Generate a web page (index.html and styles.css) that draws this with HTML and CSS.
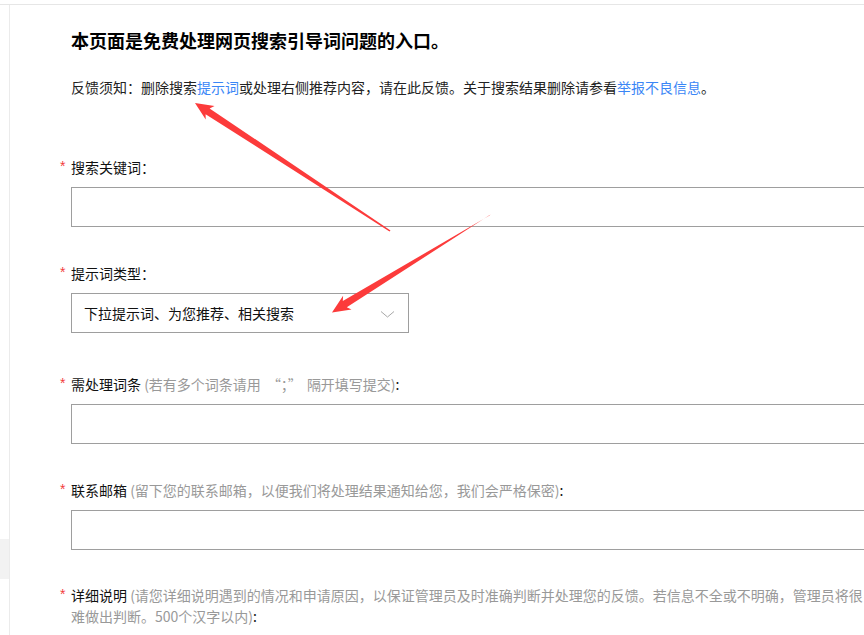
FILE: index.html
```
<!DOCTYPE html>
<html lang="zh-CN">
<head>
<meta charset="utf-8">
<title>提示词反馈</title>
<link rel="stylesheet" href="styles.css">
</head>
<body>
<div class="page">
  <aside class="side"><div class="side-block"></div></aside>
  <main class="main">
    <h1 class="title">本页面是免费处理网页搜索引导词问题的入口。</h1>
    <p class="notice">反馈须知：删除搜索<a class="link" href="#">提示词</a>或处理右侧推荐内容，请在此反馈。关于搜索结果删除请参看<a class="link" href="#">举报不良信息</a>。</p>

    <div class="field">
      <div class="label"><span class="req">*</span>搜索关键词：</div>
      <input class="box" type="text">
    </div>

    <div class="field field-select">
      <div class="label"><span class="req">*</span>提示词类型：</div>
      <div class="select">
        <span class="select-text">下拉提示词、为您推荐、相关搜索</span>
        <svg class="chev" width="15" height="8" viewBox="0 0 15 8"><path d="M1 1.5 L7.5 7 L14 1.5" fill="none" stroke="#a8a8a8" stroke-width="1"/></svg>
      </div>
    </div>

    <div class="field">
      <div class="label"><span class="req">*</span>需处理词条 <span class="hint">(若有多个词条请用<span class="quote">“；”</span>隔开填写提交)</span>:</div>
      <input class="box" type="text">
    </div>

    <div class="field">
      <div class="label"><span class="req">*</span>联系邮箱 <span class="hint">(留下您的联系邮箱，以便我们将处理结果通知给您，我们会严格保密)</span>:</div>
      <input class="box" type="text">
    </div>

    <div class="field">
      <div class="label label-multi"><span class="req">*</span>详细说明 <span class="hint">(请您详细说明遇到的情况和申请原因，以保证管理员及时准确判断并处理您的反馈。若信息不全或不明确，管理员将很</span><br><span class="hint">难做出判断。500个汉字以内)</span>:</div>
    </div>
  </main>
</div>
<svg class="arrows" width="864" height="635" viewBox="0 0 864 635">
  <polygon fill="#fc3b3b" points="390.5,230.5 209.6,108.4 214.5,106.1 195,103 205.7,119.5 205.6,114.2 389.5,231.5"/>
  <polygon fill="#fc3b3b" points="490.5,214.5 346.8,307.3 351.5,309.4 332,312.5 343.1,295.8 342.8,301.1 489.5,215.5"/>
</svg>
</body>
</html>
```
FILE: styles.css
```
html, body {
  margin: 0;
  padding: 0;
}
body {
  width: 864px;
  height: 635px;
  overflow: hidden;
  position: relative;
  background: #fff;
  color: #111;
  font-family: "Noto Sans CJK SC", "Noto Sans", sans-serif;
  font-size: 14px;
}
.page {
  margin-top: 4px;
  border-top: 1px solid #e6e6e6;
  display: flex;
  height: 630px;
}
.side {
  width: 9px;
  flex: none;
  padding-top: 534px;
}
.side-block {
  height: 40px;
  background: #f2f2f2;
}
.main {
  flex: 1;
  min-width: 0;
  overflow: hidden;
  border-left: 1px solid #ebebeb;
  padding: 23px 0 0 61px;
}
.title {
  margin: 0 0 25px;
  font-size: 18px;
  line-height: 24px;
  height: 24px;
  font-weight: bold;
  color: #000;
  white-space: nowrap;
}
.notice {
  margin: 0 0 60px;
  font-size: 14px;
  line-height: 20px;
  height: 20px;
  white-space: nowrap;
  color: #222;
}
.link {
  color: #3a86f6;
  text-decoration: none;
}
.field {
  margin-bottom: 36px;
}
.field-select {
  margin-bottom: 41px;
}
.label {
  line-height: 20px;
  height: 20px;
  margin-bottom: 10px;
  white-space: nowrap;
  color: #111;
}
.label-multi {
  line-height: 21px;
  height: 42px;
  margin-top: -1px;
}
.req {
  display: inline-block;
  width: 11px;
  margin-left: -11px;
  color: #f23c3c;
  font-family: "Liberation Sans", sans-serif;
  line-height: 14px;
  vertical-align: top;
  padding-top: 2px;
}
.hint {
  color: #999;
}
.quote {
  margin: 0 5px 0 6px;
}
.box {
  display: block;
  box-sizing: border-box;
  width: 840px;
  height: 40px;
  margin: 0;
  border: 1px solid #9e9e9e;
  border-radius: 0;
  padding: 0 12px;
  font: inherit;
  outline: none;
}
.select {
  box-sizing: border-box;
  width: 338px;
  height: 40px;
  border: 1px solid #9e9e9e;
  display: flex;
  align-items: center;
  justify-content: space-between;
  padding: 0 13px 0 12px;
  color: #111;
}
.select-text {
  line-height: 20px;
}
.chev {
  display: block;
  margin-top: 1px;
}
.arrows {
  position: absolute;
  left: 0;
  top: 0;
  pointer-events: none;
}
```
